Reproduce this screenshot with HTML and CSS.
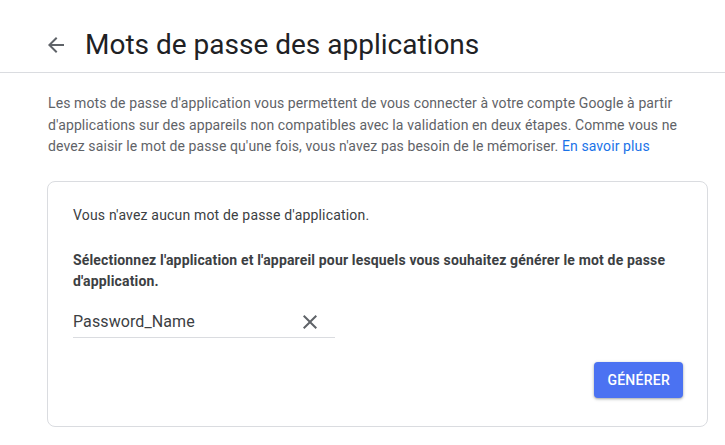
FILE: index.html
```html
<!DOCTYPE html>
<html lang="fr">
<head>
<meta charset="utf-8">
<title>Mots de passe des applications</title>
<link rel="stylesheet" href="styles.css">
</head>
<body>
<header class="header">
  <svg class="back" viewBox="0 0 24 24" width="24" height="24" aria-hidden="true"><path d="M20 11H7.83l5.59-5.59L12 4l-8 8 8 8 1.41-1.41L7.83 13H20v-2z"/></svg>
  <h1 class="title">Mots de passe des applications</h1>
</header>
<main class="main">
  <p class="intro">Les mots de passe d'application vous permettent de vous connecter à votre compte Google à partir d'applications sur des appareils non compatibles avec la validation en deux étapes. Comme vous ne devez saisir le mot de passe qu'une fois, vous n'avez pas besoin de le mémoriser. <a class="link" href="#">En savoir plus</a></p>
  <section class="card">
    <p class="empty">Vous n'avez aucun mot de passe d'application.</p>
    <p class="select">Sélectionnez l'application et l'appareil pour lesquels vous souhaitez générer le mot de passe d'application.</p>
    <div class="field">
      <span class="value">Password_Name</span>
      <svg class="clear" viewBox="0 0 24 24" width="24" height="24" aria-hidden="true"><path d="M19 6.41L17.59 5 12 10.59 6.41 5 5 6.41 10.59 12 5 17.59 6.41 19 12 13.41 17.59 19 19 17.59 13.41 12z"/></svg>
    </div>
    <div class="actions">
      <button class="btn" type="button">Générer</button>
    </div>
  </section>
</main>
</body>
</html>
```

FILE: styles.css
```css
* { box-sizing: border-box; }
html, body { margin: 0; padding: 0; background: #fff; }
body { font-family: Roboto, "Noto Sans", Arial, sans-serif; color: #202124; }

.header {
  display: flex;
  align-items: center;
  height: 73px;
  padding: 27px 0 9px 44px;
  border-bottom: 1px solid #dadce0;
}
.back { fill: #5f6368; flex: none; }
.title {
  margin: 0 0 0 17px;
  font-size: 28px;
  font-weight: 400;
  line-height: 36px;
  color: #202124;
}

.main { padding: 20px 17px 0 47px; }
.intro {
  margin: 0 0 0 1px;
  font-size: 14px;
  line-height: 21.5px;
  letter-spacing: 0.1px;
  color: #5f6368;
}
.link { color: #1a73e8; text-decoration: none; }

.card {
  margin-top: 23px;
  border: 1px solid #dadce0;
  border-radius: 8px;
  padding: 23px 24px 28px 25px;
}
.empty {
  margin: 0;
  font-size: 14px;
  line-height: 21px;
  letter-spacing: 0.18px;
  color: #3c4043;
}
.select {
  margin: 24px 0 0;
  font-size: 14px;
  line-height: 21px;
  font-weight: 700;
  letter-spacing: 0.16px;
  color: #3c4043;
}
.field {
  display: flex;
  align-items: center;
  justify-content: space-between;
  width: 262px;
  height: 31px;
  margin-top: 15px;
  border-bottom: 1px solid #dadce0;
}
.value { font-size: 16px; letter-spacing: 0.1px; color: #3c4043; }
.clear { fill: #5f6368; margin-right: 13px; }

.actions { display: flex; justify-content: flex-end; margin-top: 24px; }
.btn {
  height: 36px;
  padding: 0 13px;
  border: none;
  border-radius: 4px;
  background: #4b72f2;
  color: #fff;
  font-family: Roboto, Arial, sans-serif;
  font-size: 14px;
  font-weight: 500;
  letter-spacing: 0.25px;
  text-transform: uppercase;
  box-shadow: 0 1px 2px rgba(60,64,67,.3), 0 1px 3px 1px rgba(60,64,67,.15);
}
```
